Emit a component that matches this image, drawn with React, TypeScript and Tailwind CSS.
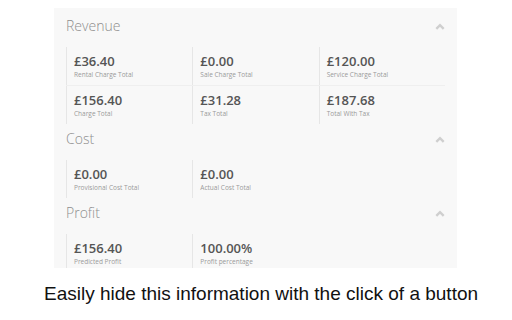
import React from 'react';

type Stat = { value: string; label: string };

const sections: { title: string; rows: Stat[][] }[] = [
  {
    title: 'Revenue',
    rows: [
      [
        { value: '£36.40', label: 'Rental Charge Total' },
        { value: '£0.00', label: 'Sale Charge Total' },
        { value: '£120.00', label: 'Service Charge Total' },
      ],
      [
        { value: '£156.40', label: 'Charge Total' },
        { value: '£31.28', label: 'Tax Total' },
        { value: '£187.68', label: 'Total With Tax' },
      ],
    ],
  },
  {
    title: 'Cost',
    rows: [
      [
        { value: '£0.00', label: 'Provisional Cost Total' },
        { value: '£0.00', label: 'Actual Cost Total' },
      ],
    ],
  },
  {
    title: 'Profit',
    rows: [
      [
        { value: '£156.40', label: 'Predicted Profit' },
        { value: '100.00%', label: 'Profit percentage' },
      ],
    ],
  },
];

const ChevronUp = () => (
  <svg width="10" height="7" viewBox="0 0 10 7" className="mr-[-1px]">
    <polyline points="1.3,5.8 5,2.1 8.7,5.8" fill="none" stroke="#cfcfcf" strokeWidth="2.4" />
  </svg>
);

const Section = ({ title, rows, first }: { title: string; rows: Stat[][]; first?: boolean }) => (
  <div className={first ? '' : 'mt-[5px]'}>
    <div className="flex items-center justify-between">
      <h2 className="text-[14px] leading-[20px] font-light text-[#8e8e8e]">{title}</h2>
      <button className="flex items-center justify-center w-[12px] h-[12px]">
        <ChevronUp />
      </button>
    </div>
    <div className="mt-[11px]">
      {rows.map((row, i) => (
        <div key={i} className={`grid grid-cols-3 ${i > 0 ? 'border-t border-[#efefef]' : ''}`}>
          {row.map((stat) => (
            <div key={stat.label} className="border-l border-[#e6e6e6] pl-[7px] pt-[6px] pb-[6px]">
              <div className="text-[13px] leading-[16px] font-semibold text-[#555555]">{stat.value}</div>
              <div className="mt-[2px] text-[6.5px] leading-[8px] text-[#9a9a9a]">{stat.label}</div>
            </div>
          ))}
        </div>
      ))}
    </div>
  </div>
);

export default function App() {
  return (
    <div className="w-[512px] h-[320px] bg-white overflow-hidden">
      <div
        className="ml-[54px] mt-[8px] w-[403px] h-[260px] overflow-hidden bg-[#f8f8f8] px-[12px] pt-[8px]"
        style={{ fontFamily: '"Open Sans", sans-serif' }}
      >
        {sections.map((s, i) => (
          <Section key={s.title} title={s.title} rows={s.rows} first={i === 0} />
        ))}
      </div>
      <p
        className="mt-[15px] pl-[44px] text-[19px] leading-[22px] text-[#111111] whitespace-nowrap"
        style={{ fontFamily: '"Liberation Sans", Arial, sans-serif' }}
      >
        Easily hide this information with the click of a button
      </p>
    </div>
  );
}
